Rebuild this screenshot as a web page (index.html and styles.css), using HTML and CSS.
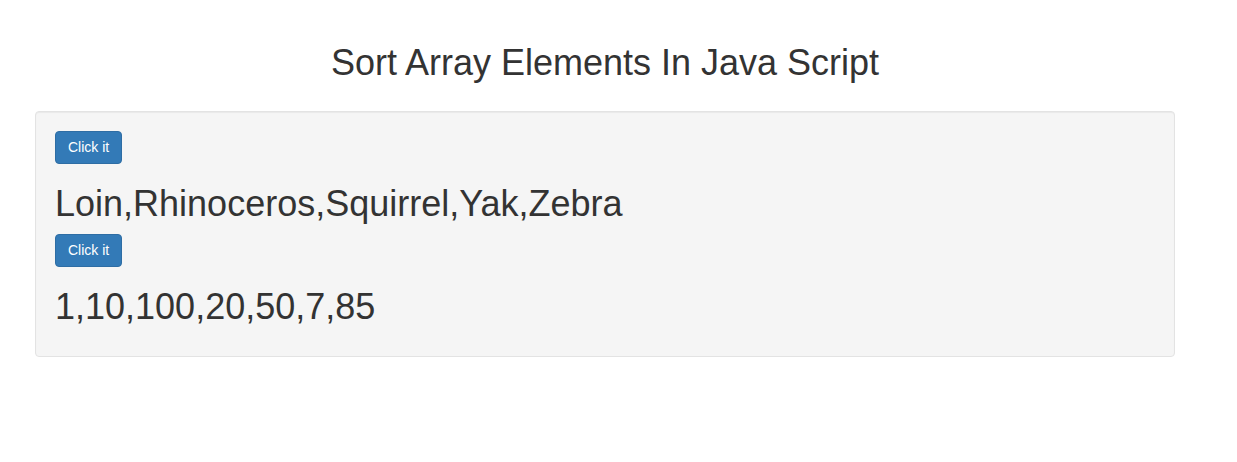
FILE: index.html
```html
<!DOCTYPE html>
<html lang="en">
<head>
<meta charset="utf-8">
<title>Sort Array Elements In Java Script</title>
<link rel="stylesheet" href="styles.css">
</head>
<body>
<div class="container">
  <h1 class="title">Sort Array Elements In Java Script</h1>
  <div class="well">
    <button class="btn" type="button">Click it</button>
    <h1 class="result">Loin,Rhinoceros,Squirrel,Yak,Zebra</h1>
    <button class="btn" type="button">Click it</button>
    <h1 class="result">1,10,100,20,50,7,85</h1>
  </div>
</div>
</body>
</html>
```

FILE: styles.css
```css
* { box-sizing: border-box; }
html, body { margin: 0; padding: 0; }
body {
  font-family: "Liberation Sans", Arial, Helvetica, sans-serif;
  font-size: 14px;
  line-height: 1.42857;
  color: #333;
  background: #fff;
}
.container {
  width: 1140px;
  margin-left: 35px;
  padding-top: 1px;
}
.title {
  font-size: 36px;
  font-weight: 400;
  line-height: 1.1;
  text-align: center;
  margin: 42px 0 28px;
}
.well {
  background: #f5f5f5;
  border: 1px solid #e3e3e3;
  border-radius: 4px;
  box-shadow: inset 0 1px 1px rgba(0,0,0,.05);
  padding: 19px;
  min-height: 20px;
}
.btn {
  display: block;
  font-family: "Liberation Sans", Arial, Helvetica, sans-serif;
  font-size: 14px;
  line-height: 19.5px;
  padding: 6px 12px;
  color: #fff;
  background: #337ab7;
  border: 1px solid #2e6da4;
  border-radius: 4px;
  cursor: pointer;
}
.result {
  font-size: 36px;
  font-weight: 400;
  line-height: 1.1;
  margin: 20px 0 10px;
}
```
